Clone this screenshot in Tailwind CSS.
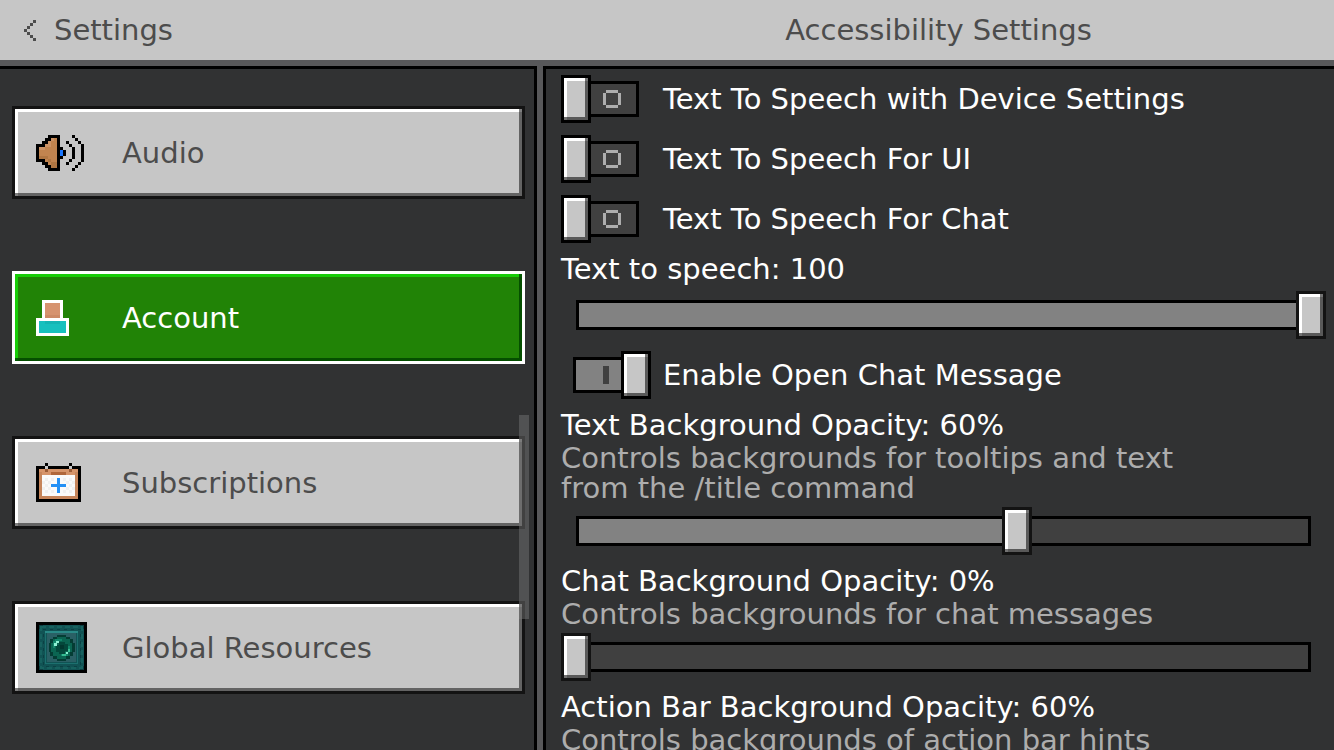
<!DOCTYPE html>
<html lang="en">
<head>
    <meta charset="UTF-8">
    <meta name="viewport" content="width=device-width, initial-scale=1.0">
    <title>Accessibility Settings</title>
    <script src="https://cdn.jsdelivr.net/npm/@tailwindcss/browser@4"></script>
</head>
<body class="h-screen flex flex-col overflow-hidden bg-[#58585a] font-['DejaVu_Sans',sans-serif] text-[29px] leading-[30px] text-white">
    <header class="grid grid-cols-[537fr_791fr] gap-[6px] h-[60px] shrink-0 items-center bg-[#c6c6c6] text-[#4c4c4c]">
        <a href="#" class="flex items-center gap-[18px] pl-6">
            <svg class="w-3 h-[21px]" viewBox="0 0 4 7" fill="currentColor" shape-rendering="crispEdges" aria-hidden="true">
                <path d="M3 0h1v1h-1zM2 1h1v1h-1zM1 2h1v1h-1zM0 3h1v1h-1zM1 4h1v1h-1zM2 5h1v1h-1zM3 6h1v1h-1z"/>
            </svg>
            Settings
        </a>
        <h1 class="text-center">Accessibility Settings</h1>
    </header>

    <main class="grid grid-cols-[537fr_791fr] gap-[6px] grow min-h-0 pt-[6px]">
        <!-- Sections -->
        <nav class="relative flex flex-col gap-[72px] min-h-0 overflow-hidden border-t-3 border-r-3 border-black bg-[#313233] pt-[37px] pl-3 pr-[9px]">
            <button class="flex items-center gap-[35px] h-[93px] shrink-0 pl-[21px] border-3 border-[#131313] bg-[#c6c6c6] text-[#4c4c4c] shadow-[inset_-3px_-3px_rgb(0_0_0/0.5),inset_3px_3px_#fff]">
                <span class="w-[51px]">
                    <svg class="w-12 h-9" viewBox="0 0 16 12" shape-rendering="crispEdges" aria-hidden="true">
                        <path fill="#c1844f" d="M5 1h2v10h-2v-1h-1v-1h-1v-1h-2v-4h2v-1h1v-1h1z"/>
                        <path fill="#cc9366" d="M5 1h1v1h-1zM4 2h1v1h-1zM5 3h-1v1h1zM3 3h1v1h-1zM1 4h2v1h-2z"/>
                        <path fill="#b07642" d="M1 7h3v1h-3zM4 8h1v1h-1zM5 9h2v1h-2zM5 10h2v1h-2z"/>
                        <path d="M4 0h4v12h-4v-1h-1v-1h-1v-1h-2v-6h2v-1h1v-1h1zM5 1v1h-1v1h-1v1h-2v4h2v1h1v1h1v1h2v-10z" fill-rule="evenodd"/>
                        <path d="M8 4h1v1h1v2h-1v1h-1zM12 0h1v1h-1zM13 1h1v1h-1zM14 2h1v1h-1zM15 3h1v6h-1zM14 9h1v1h-1zM13 10h1v1h-1zM12 11h1v1h-1zM10 2h1v1h-1zM11 3h1v1h-1zM12 4h1v4h-1zM11 8h1v1h-1zM10 9h1v1h-1z"/>
                        <path fill="#1976ff" d="M8 5h1v2h-1z"/>
                    </svg>
                </span>
                Audio
            </button>
            <button class="flex items-center gap-[35px] h-[93px] shrink-0 pl-[21px] border-3 border-white bg-[#218306] shadow-[inset_-3px_-3px_rgb(0_70_0/0.85),inset_3px_3px_#17cd07]" aria-current="page">
                <span class="w-[51px]">
                    <svg class="w-[33px] h-9" viewBox="0 0 11 12" shape-rendering="crispEdges" aria-hidden="true">
                        <path fill="#fff" d="M2 0h7v6h2v6h-11v-6h2z"/>
                        <path fill="#d6936f" d="M3 1h5v5h-5z"/>
                        <path fill="#cd8a66" d="M3 5h5v1h-5z"/>
                        <path fill="#17c0be" d="M1 7h9v4h-9z"/>
                        <path fill="#14b5b4" d="M3 7h5v1h-5z"/>
                    </svg>
                </span>
                Account
            </button>
            <button class="flex items-center gap-[35px] h-[93px] shrink-0 pl-[21px] border-3 border-[#131313] bg-[#c6c6c6] text-[#4c4c4c] shadow-[inset_-3px_-3px_rgb(0_0_0/0.5),inset_3px_3px_#fff]">
                <span class="w-[51px]">
                    <svg class="w-[45px] h-[39px]" viewBox="0 0 15 13" shape-rendering="crispEdges" aria-hidden="true">
                        <path d="M3 0h1v1h-1zM11 0h1v1h-1zM0 1h15v12h-15z"/>
                        <path fill="#d6946a" d="M1 2h13v10h-13z"/>
                        <path fill="#c6855b" d="M1 11h13v1h-13zM1 3h1v8h-1zM13 3h1v8h-1z"/>
                        <path fill="#c6c6c6" d="M3 1h1v1h-1zM11 1h1v1h-1z"/>
                        <path fill="#9b5c36" d="M3 2h1v1h-1zM11 2h1v1h-1z"/>
                        <path fill="#b0673b" d="M5 3h5v1h-5z"/>
                        <path fill="#fafafa" d="M2 4h11v7h-11z"/>
                        <path fill="#f0f0f0" d="M3 5h1v1h-1zM5 5h1v1h-1zM9 5h1v1h-1zM11 5h1v1h-1zM2 6h1v1h-1zM4 6h1v1h-1zM10 6h1v1h-1zM12 6h1v1h-1zM3 7h1v1h-1zM11 7h1v1h-1zM2 8h1v1h-1zM4 8h1v1h-1zM10 8h1v1h-1zM12 8h1v1h-1zM3 9h1v1h-1zM5 9h1v1h-1zM9 9h1v1h-1zM11 9h1v1h-1z"/>
                        <path fill="#2490f5" d="M7 5h1v2h2v1h-2v2h-1v-2h-2v-1h2z"/>
                    </svg>
                </span>
                Subscriptions
            </button>
            <button class="flex items-center gap-[35px] h-[93px] shrink-0 pl-[21px] border-3 border-[#131313] bg-[#c6c6c6] text-[#4c4c4c] shadow-[inset_-3px_-3px_rgb(0_0_0/0.5),inset_3px_3px_#fff]">
                <span class="w-[51px]">
                    <svg class="w-[51px] h-[51px]" viewBox="0 0 51 51" shape-rendering="crispEdges" aria-hidden="true">
                        <path d="M0 0h51v51h-51z"/>
                        <path fill="#115354" d="M3 3h45v45h-45z"/>
                        <path fill="none" stroke="#17625f" stroke-width="2" stroke-dasharray="5 3" d="M5 5h41v41h-41z"/>
                        <path fill="none" stroke="#0b4144" stroke-width="1" stroke-dasharray="3 4" d="M7 7h37v37h-37z"/>
                        <path fill="#0b3d40" d="M3 3h4v1h-3v3h-1zM44 3h4v4h-1v-3h-3zM3 44h1v3h3v1h-4zM47 44h1v4h-4v-1h3z"/>
                        <path fill="#2a8a87" d="M9 9h33v2h-33z"/>
                        <path fill="#1c706f" d="M9 11h1v31h-1zM41 11h1v31h-1zM9 41h33v1h-33z"/>
                        <path fill="#2a6065" d="M11 11h29v29h-29z"/>
                        <path fill="#043d34" d="M21 13h9v2h4v2h3v4h2v9h-2v4h-3v3h-4v2h-9v-2h-4v-3h-3v-4h-1v-9h1v-4h3v-2h4z"/>
                        <path fill="#0b6552" d="M21 15h9v2h4v4h2v9h-2v4h-4v3h-9v-3h-4v-4h-2v-9h2v-4h4z"/>
                        <path fill="#13876b" d="M19 17h7v2h-4v2h-3v5h-2v-7h2zM29 30h3v-6h2v6h-2v4h-7v-2h4z"/>
                        <path fill="#04483b" d="M23 20h6v2h3v7h-3v3h-6v-2h-3v-7h3z"/>
                        <path fill="#02382f" d="M24 23h4v4h-4z"/>
                        <path fill="#8df0d2" d="M20 19h3v2h-2v3h-3v-3h2zM30 30h2v2h-2z"/>
                        <path fill="#38bd92" d="M26 32h4v2h-4zM32 27h2v3h-2z"/>
                    </svg>
                </span>
                Global Resources
            </button>
            <div class="absolute top-[346px] right-[5px] w-[10px] h-[204px] bg-[#7a7a7a]/45"></div>
        </nav>

        <!-- Accessibility options -->
        <section class="min-h-0 overflow-hidden border-t-3 border-l-3 border-black bg-[#313233] pt-[6px] pl-[15px] pr-2">
            <div class="flex flex-col gap-3">
                <label class="flex items-center gap-6">
                    <span class="relative w-[78px] h-12">
                        <input type="checkbox" class="block appearance-none relative w-full h-full before:absolute before:left-[27px] before:right-0 before:top-[6px] before:h-9 before:border-3 before:border-black before:bg-[#404040] after:absolute after:left-0 after:top-0 after:w-[30px] after:h-12 after:border-3 after:border-black after:bg-[#c6c6c6] after:shadow-[inset_-3px_-3px_rgb(0_0_0/0.55),inset_3px_3px_#fff]">
                        <svg class="absolute left-[42px] top-[15px] w-[18px] h-[18px]" viewBox="0 0 6 6" fill="#adadad" shape-rendering="crispEdges" aria-hidden="true">
                            <path d="M1 0h4v1h-4zM0 1h1v4h-1zM5 1h1v4h-1zM1 5h4v1h-4z"/>
                        </svg>
                    </span>
                    Text To Speech with Device Settings
                </label>
                <label class="flex items-center gap-6">
                    <span class="relative w-[78px] h-12">
                        <input type="checkbox" class="block appearance-none relative w-full h-full before:absolute before:left-[27px] before:right-0 before:top-[6px] before:h-9 before:border-3 before:border-black before:bg-[#404040] after:absolute after:left-0 after:top-0 after:w-[30px] after:h-12 after:border-3 after:border-black after:bg-[#c6c6c6] after:shadow-[inset_-3px_-3px_rgb(0_0_0/0.55),inset_3px_3px_#fff]">
                        <svg class="absolute left-[42px] top-[15px] w-[18px] h-[18px]" viewBox="0 0 6 6" fill="#adadad" shape-rendering="crispEdges" aria-hidden="true">
                            <path d="M1 0h4v1h-4zM0 1h1v4h-1zM5 1h1v4h-1zM1 5h4v1h-4z"/>
                        </svg>
                    </span>
                    Text To Speech For UI
                </label>
                <label class="flex items-center gap-6">
                    <span class="relative w-[78px] h-12">
                        <input type="checkbox" class="block appearance-none relative w-full h-full before:absolute before:left-[27px] before:right-0 before:top-[6px] before:h-9 before:border-3 before:border-black before:bg-[#404040] after:absolute after:left-0 after:top-0 after:w-[30px] after:h-12 after:border-3 after:border-black after:bg-[#c6c6c6] after:shadow-[inset_-3px_-3px_rgb(0_0_0/0.55),inset_3px_3px_#fff]">
                        <svg class="absolute left-[42px] top-[15px] w-[18px] h-[18px]" viewBox="0 0 6 6" fill="#adadad" shape-rendering="crispEdges" aria-hidden="true">
                            <path d="M1 0h4v1h-4zM0 1h1v4h-1zM5 1h1v4h-1zM1 5h4v1h-4z"/>
                        </svg>
                    </span>
                    Text To Speech For Chat
                </label>
            </div>

            <label for="speech" class="block mt-[11px]">Text to speech: 100</label>
            <div class="relative h-12 mt-[7px]">
                <div class="absolute inset-x-[15px] top-[9px] h-[30px] border-3 border-black bg-[#404040]">
                    <div class="h-full bg-[#828282]" style="width: 100%"></div>
                </div>
                <input id="speech" type="range" min="0" max="100" value="100" class="relative block w-full h-12 appearance-none bg-transparent [&::-webkit-slider-thumb]:appearance-none [&::-webkit-slider-thumb]:w-[30px] [&::-webkit-slider-thumb]:h-12 [&::-webkit-slider-thumb]:border-3 [&::-webkit-slider-thumb]:border-[#131313] [&::-webkit-slider-thumb]:bg-[#c6c6c6] [&::-webkit-slider-thumb]:shadow-[inset_-3px_-3px_rgb(0_0_0/0.55),inset_3px_3px_#fff]">
            </div>

            <label class="flex items-center gap-3 mt-3 ml-3">
                <span class="relative w-[78px] h-12">
                    <input type="checkbox" checked class="block appearance-none relative w-full h-full before:absolute before:left-0 before:right-[27px] before:top-[6px] before:h-9 before:border-3 before:border-black before:bg-[#828282] after:absolute after:right-0 after:top-0 after:w-[30px] after:h-12 after:border-3 after:border-black after:bg-[#c6c6c6] after:shadow-[inset_-3px_-3px_rgb(0_0_0/0.55),inset_3px_3px_#fff]">
                    <span class="absolute left-[30px] top-[15px] w-[6px] h-[18px] bg-[#404040]"></span>
                </span>
                Enable Open Chat Message
            </label>

            <label for="text-opacity" class="block mt-[11px]">Text Background Opacity: 60%</label>
            <p class="mt-[3px] text-[#adadad]">Controls backgrounds for tooltips and text<br>from the /title command</p>
            <div class="relative h-12 mt-1">
                <div class="absolute inset-x-[15px] top-[9px] h-[30px] border-3 border-black bg-[#404040]">
                    <div class="h-full bg-[#828282]" style="width: 60%"></div>
                </div>
                <input id="text-opacity" type="range" min="0" max="100" value="60" class="relative block w-full h-12 appearance-none bg-transparent [&::-webkit-slider-thumb]:appearance-none [&::-webkit-slider-thumb]:w-[30px] [&::-webkit-slider-thumb]:h-12 [&::-webkit-slider-thumb]:border-3 [&::-webkit-slider-thumb]:border-[#131313] [&::-webkit-slider-thumb]:bg-[#c6c6c6] [&::-webkit-slider-thumb]:shadow-[inset_-3px_-3px_rgb(0_0_0/0.55),inset_3px_3px_#fff]">
            </div>

            <label for="chat-opacity" class="block mt-[11px]">Chat Background Opacity: 0%</label>
            <p class="mt-[3px] text-[#adadad]">Controls backgrounds for chat messages</p>
            <div class="relative h-12 mt-1">
                <div class="absolute inset-x-[15px] top-[9px] h-[30px] border-3 border-black bg-[#404040]">
                    <div class="h-full bg-[#828282]" style="width: 0%"></div>
                </div>
                <input id="chat-opacity" type="range" min="0" max="100" value="0" class="relative block w-full h-12 appearance-none bg-transparent [&::-webkit-slider-thumb]:appearance-none [&::-webkit-slider-thumb]:w-[30px] [&::-webkit-slider-thumb]:h-12 [&::-webkit-slider-thumb]:border-3 [&::-webkit-slider-thumb]:border-[#131313] [&::-webkit-slider-thumb]:bg-[#c6c6c6] [&::-webkit-slider-thumb]:shadow-[inset_-3px_-3px_rgb(0_0_0/0.55),inset_3px_3px_#fff]">
            </div>

            <h2 class="mt-[11px]">Action Bar Background Opacity: 60%</h2>
            <p class="mt-[3px] text-[#adadad]">Controls backgrounds of action bar hints</p>
        </section>
    </main>
</body>
</html>
